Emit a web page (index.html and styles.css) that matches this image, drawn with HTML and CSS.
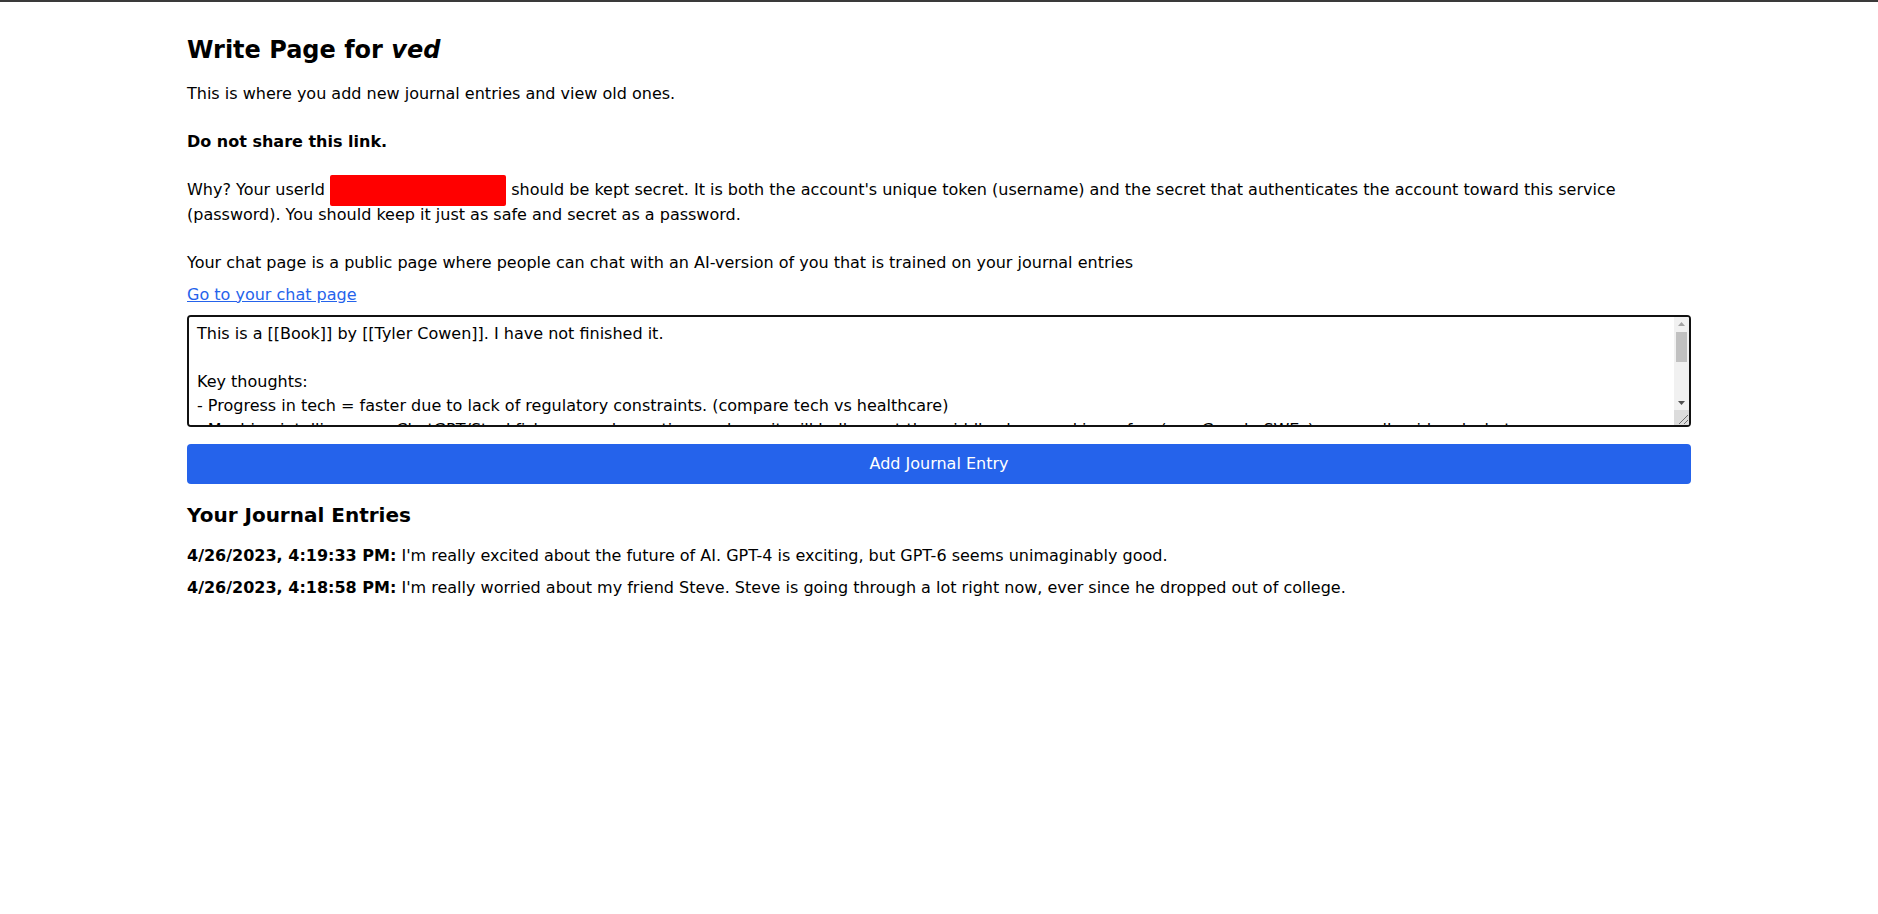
FILE: index.html
```html
<!DOCTYPE html>
<html lang="en">
<head>
    <meta charset="UTF-8">
    <meta name="viewport" content="width=device-width, initial-scale=1.0">
    <title>Write Page</title>
    <link rel="stylesheet" href="styles.css">
</head>
<body>

<div class="container">
    <h1>Write Page for <em>ved</em></h1>
    <p class="intro">This is where you add new journal entries and view old ones.</p>
    <p class="warning">Do not share this link.</p>
    <p class="why">Why? Your userId <span class="user-id"></span> should be kept secret. It is both the account's unique token (username) and the secret that authenticates the account toward this service (password). You should keep it just as safe and secret as a password.</p>
    <p class="chat-note">Your chat page is a public page where people can chat with an AI-version of you that is trained on your journal entries</p>
    <p class="chat-link"><a href="#">Go to your chat page</a></p>

    <form id="entryForm">
        <div class="entry-box">
            <textarea name="entry" class="entry-input" spellcheck="false">This is a [[Book]] by [[Tyler Cowen]]. I have not finished it.

Key thoughts:
- Progress in tech = faster due to lack of regulatory constraints. (compare tech vs healthcare)
- Machine intelligence = ChatGPT/Stockfish = complementing workers; it will hollow out the middle class, making a few (e.g. Google SWEs) very well paid and what
- The rest of the workforce will move into services that are harder to automate
- Average is over: the top 10-15% of earners will pull away from everyone else
- Freestyle chess as a model for human + machine teams
- Education will need to change to teach people how to work with machines

Questions:
- Does this still hold now that LLMs exist?</textarea>
            <!-- desktop style scrollbar, the headless one is hidden -->
            <div class="fake-scroll">
                <div class="scroll-btn">
                    <svg width="7" height="4" viewBox="0 0 7 4"><polygon points="0,4 7,4 3.5,0" fill="#a3a3a3"/></svg>
                </div>
                <div class="scroll-track"><div class="scroll-thumb"></div></div>
                <div class="scroll-btn">
                    <svg width="7" height="4" viewBox="0 0 7 4"><polygon points="0,0 7,0 3.5,4" fill="#505050"/></svg>
                </div>
                <div class="scroll-corner">
                    <svg width="15" height="15" viewBox="0 0 15 15"><path d="M14 5 L5 14 M14 10 L10 14" stroke="#6e6e6e" stroke-width="1"/></svg>
                </div>
            </div>
        </div>
        <button type="submit">Add Journal Entry</button>
    </form>

    <h2>Your Journal Entries</h2>
    <ul class="entries">
        <li><strong>4/26/2023, 4:19:33 PM:</strong> I'm really excited about the future of AI. GPT-4 is exciting, but GPT-6 seems unimaginably good.</li>
        <li><strong>4/26/2023, 4:18:58 PM:</strong> I'm really worried about my friend Steve. Steve is going through a lot right now, ever since he dropped out of college.</li>
    </ul>
</div>

</body>
</html>
```

FILE: styles.css
```css
body {
    font-family: "DejaVu Sans", sans-serif;
    font-size: 16px;
    line-height: 24px;
    color: #000;
    background-color: #fff;
    margin: 0;
    border-top: 2px solid #3a3a3a;
}

.container {
    box-sizing: border-box;
    max-width: 1536px;
    margin: 0 auto;
    padding: 32px 16px 0;
}

h1 {
    font-size: 24px;
    line-height: 32px;
    font-weight: bold;
    margin: 0 0 16px;
}

p {
    margin: 0 0 24px;
}

.warning {
    font-weight: bold;
}

.user-id {
    display: inline-block;
    width: 176px;
    height: 31px;
    margin: -4px 0 -3px;
    vertical-align: middle;
    background-color: #ff0000;
    border-radius: 2px;
}

.chat-note {
    margin-bottom: 8px;
}

.chat-link {
    margin-bottom: 8px;
}

.chat-link a {
    color: #2563eb;
}

.entry-box {
    position: relative;
}

.entry-input {
    display: block;
    box-sizing: border-box;
    width: 100%;
    height: 112px;
    padding: 5px 23px 5px 8px;
    border: 2px solid #111;
    border-radius: 4px;
    font-family: "DejaVu Sans", sans-serif;
    font-size: 16px;
    line-height: 24px;
    color: #000;
    outline: none;
    resize: none;
}

.fake-scroll {
    position: absolute;
    top: 2px;
    right: 2px;
    bottom: 2px;
    width: 15px;
    display: flex;
    flex-direction: column;
    background-color: #f1f1f1;
    border-radius: 0 2px 2px 0;
    overflow: hidden;
}

.scroll-btn {
    height: 14px;
    display: flex;
    align-items: center;
    justify-content: center;
}

.scroll-track {
    flex: 1;
    padding-top: 1px;
}

.scroll-thumb {
    height: 30px;
    margin: 0 2px;
    background-color: #c1c1c1;
}

.scroll-corner {
    height: 15px;
    background-color: #dcdcdc;
}

.scroll-corner svg {
    display: block;
}

button {
    display: block;
    width: 100%;
    margin-top: 17px;
    padding: 8px 16px;
    background-color: #2563eb;
    color: white;
    border: none;
    border-radius: 4px;
    font-family: "DejaVu Sans", sans-serif;
    font-size: 16px;
    line-height: 24px;
    cursor: pointer;
}

h2 {
    font-size: 20px;
    line-height: 28px;
    font-weight: bold;
    margin: 17px 0 15px;
}

.entries {
    list-style: none;
    margin: 0;
    padding: 0;
}

.entries li {
    margin-bottom: 8px;
}
```
